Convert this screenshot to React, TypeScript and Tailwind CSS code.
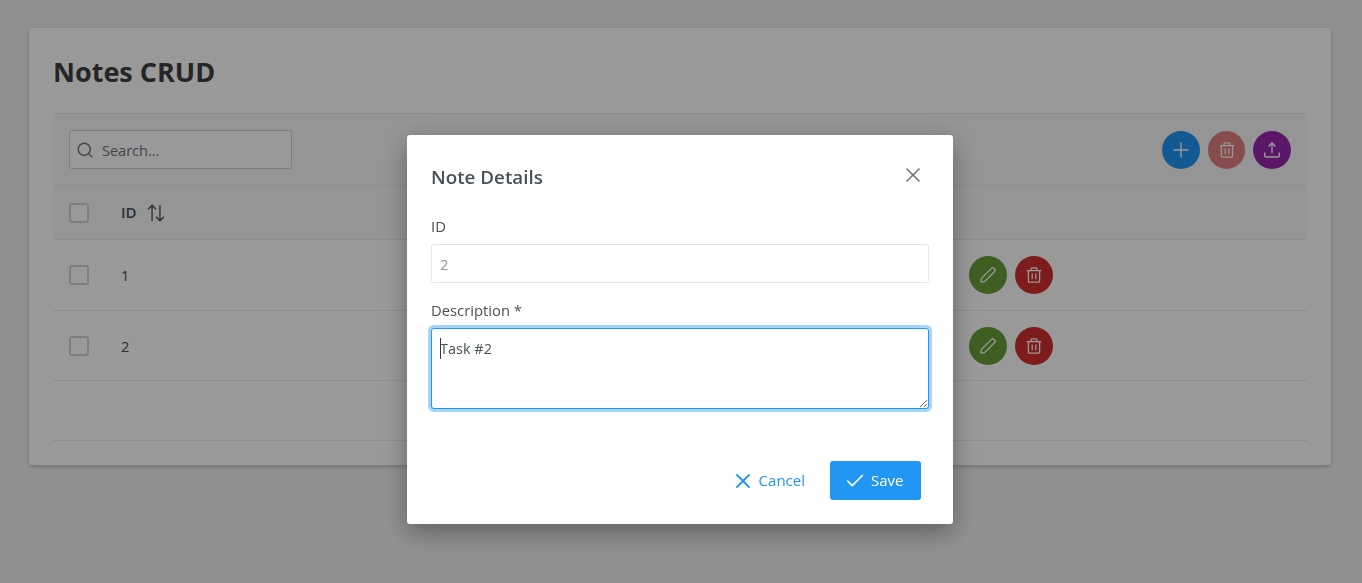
import { Check, Plus, Search, X } from 'lucide-react'

function TrashIcon({ className }: { className?: string }) {
  return (
    <svg className={className} viewBox="0 0 16 16" fill="none" stroke="currentColor" strokeWidth="1.3">
      <path d="M0.8 3.6h14.4" />
      <path d="M5 3.4V1.9c0-.6.4-1 1-1h4c.6 0 1 .4 1 1v1.5" />
      <path d="M2.4 3.6v10.3c0 .8.5 1.3 1.3 1.3h8.6c.8 0 1.3-.5 1.3-1.3V3.6" />
      <path d="M6.2 6.4v5.8M9.8 6.4v5.8" />
    </svg>
  )
}

function PencilIcon({ className }: { className?: string }) {
  return (
    <svg className={className} viewBox="0 0 16 16" fill="none" stroke="currentColor" strokeWidth="1.3" strokeLinejoin="round">
      <path d="M1 15l.4-3.6L11.8 1.1c.5-.5 1.2-.5 1.7 0l1.4 1.4c.5.5.5 1.2 0 1.7L4.6 14.6 1 15z" />
    </svg>
  )
}

function UploadIcon({ className }: { className?: string }) {
  return (
    <svg className={className} viewBox="0 0 16 16" fill="none" stroke="currentColor" strokeWidth="1.4">
      <path d="M8 11V1.2M4.6 4.4L8 1l3.4 3.4" />
      <path d="M.7 10.5v3.3c0 .7.5 1.2 1.2 1.2h12.2c.7 0 1.2-.5 1.2-1.2v-3.3" />
    </svg>
  )
}

function SortIcon({ className }: { className?: string }) {
  return (
    <svg className={className} viewBox="0 0 16 16" fill="none" stroke="currentColor" strokeWidth="1.2">
      <path d="M4.5 15V1.2M1 4.6l3.5-3.5L8 4.6" />
      <path d="M11.5 1v13.8M8 11.4l3.5 3.5 3.5-3.5" />
    </svg>
  )
}

function RoundButton({ color, children }: { color: string; children: React.ReactNode }) {
  return (
    <button className={`flex h-[38px] w-[38px] items-center justify-center rounded-full text-white ${color}`}>
      {children}
    </button>
  )
}

function Checkbox() {
  return <div className="h-5 w-5 rounded-[3px] border-2 border-[#ced4da] bg-white" />
}

function Row({ id, height }: { id: number; height: string }) {
  return (
    <div className={`flex items-center border-b border-[#e9ecef] pl-4 ${height}`}>
      <div className="w-[52px]">
        <Checkbox />
      </div>
      <div className="w-[848px] pt-[2px] text-[14.5px] text-[#495057]">{id}</div>
      <div className="flex gap-2">
        <RoundButton color="bg-[#689f38]">
          <PencilIcon className="h-4 w-4" />
        </RoundButton>
        <RoundButton color="bg-[#d32f2f]">
          <TrashIcon className="h-4 w-4" />
        </RoundButton>
      </div>
    </div>
  )
}

export default function App() {
  return (
    <div className="h-[583px] overflow-hidden bg-[#f1f1f1] pl-[29px] pt-[28px] font-['Open_Sans',sans-serif] text-[#495057]">
      <div className="h-[437px] w-[1302px] rounded-[3px] bg-white px-6 shadow-[0_2px_4px_rgba(0,0,0,0.2)]">
        <h1 className="flex h-[85px] items-center pt-[3px] text-[27px] font-bold text-[#3f3f3f]">Notes CRUD</h1>

        <div className="flex h-[73px] items-center justify-between border-y border-[#e9ecef] bg-[#f8f9fa] px-4">
          <div className="flex h-[39px] w-[223px] items-center gap-2 rounded-[3px] border border-[#ced4da] bg-white pl-[6px]">
            <Search className="h-[18px] w-[18px] text-[#6c757d]" strokeWidth={1.8} />
            <span className="pt-[2px] text-[14.5px] text-[#6c757d]">Search...</span>
          </div>
          <div className="flex gap-2">
            <RoundButton color="bg-[#2196f3]">
              <Plus className="h-6 w-6" strokeWidth={1.4} />
            </RoundButton>
            <RoundButton color="bg-[#d32f2f] opacity-60 !w-[37px]">
              <TrashIcon className="h-4 w-4" />
            </RoundButton>
            <RoundButton color="bg-[#9c27b0]">
              <UploadIcon className="h-4 w-4" />
            </RoundButton>
          </div>
        </div>

        <div className="flex h-[54px] items-center border-b border-[#e9ecef] bg-[#f8f9fa] pl-4">
          <div className="w-[52px]">
            <Checkbox />
          </div>
          <span className="text-[15px] font-semibold text-[#495057]">ID</span>
          <SortIcon className="ml-[10px] h-[18px] w-[18px] text-[#495057]" />
        </div>

        <Row id={1} height="h-[71px]" />
        <Row id={2} height="h-[70px] pt-px" />
        <div className="h-[60px] border-b border-[#e9ecef]" />
      </div>

      {/* dialog mask */}
      <div className="fixed inset-0 bg-black/40 pl-[407px] pt-[135px]">
        <div className="h-[389px] w-[546px] rounded-[3px] bg-white shadow-[0_8px_24px_rgba(0,0,0,0.35)]">
          <div className="flex items-start justify-between px-6 pt-[28px]">
            <h2 className="text-[18.8px] leading-[28px] font-semibold text-[#495057]">Note Details</h2>
            <button className="mt-[-4px] flex h-8 w-8 items-center justify-center text-[#6c757d]">
              <X className="h-6 w-6" strokeWidth={1.6} />
            </button>
          </div>

          <div className="px-6 pt-[25px]">
            <label className="block text-[14.8px] leading-[20px] text-[#495057]">ID</label>
            <input
              disabled
              defaultValue="2"
              className="mt-[8px] block h-[39px] w-full rounded-[3px] border border-[#ced4da] bg-white px-2 pt-px text-[14.5px] text-[#495057] opacity-60 outline-none"
            />

            <label className="mt-[17px] block text-[14.8px] leading-[20px] text-[#495057]">Description *</label>
            <div className="relative mt-[8px]">
              <textarea
                defaultValue="Task #2"
                className="block h-[81px] w-full rounded-[3px] border border-[#2196f3] bg-white px-2 py-[8px] text-[14.5px] leading-[24px] text-[#495057] shadow-[0_0_0_3px_#a6d5fa] outline-none"
              />
              {/* text caret */}
              <span className="absolute left-[9px] top-[10px] h-[21px] w-px bg-[#343a40]" />
            </div>
          </div>

          <div className="mt-[52px] flex justify-end gap-[25px] pr-8">
            <button className="flex h-[39px] items-center gap-[4px] rounded-[3px] text-[15px] text-[#2196f3]">
              <X className="h-6 w-6" strokeWidth={1.8} />
              Cancel
            </button>
            <button className="flex h-[39px] w-[91px] items-center gap-[5px] rounded-[3px] bg-[#2196f3] pl-[14px] text-[15px] font-medium text-white">
              <Check className="h-[22px] w-[22px]" strokeWidth={1.8} />
              Save
            </button>
          </div>
        </div>
      </div>
    </div>
  )
}
